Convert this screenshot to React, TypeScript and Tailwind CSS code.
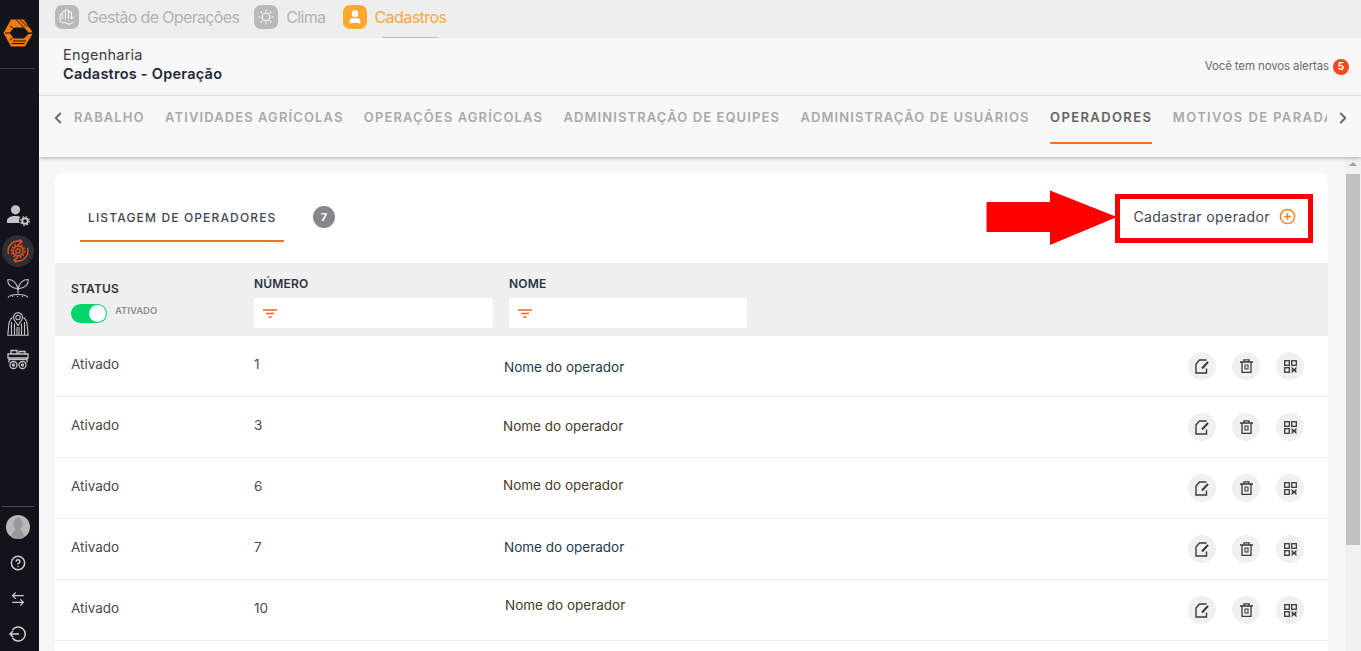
import React from "react";
import { ChevronLeft, ChevronRight, CirclePlus, CircleHelp, ArrowLeftRight, User } from "lucide-react";

const font = "font-['Inter','Noto_Sans',sans-serif]";

function Logo() {
  return (
    <svg width="30" height="28" viewBox="0 0 30 28" fill="none">
      <path d="M8 .5H22L29.500 13.500H25.500L21 8.500H11L6.500 14L11 19.500H21L25.500 15H29.500L22 27.500H8L.5 14Z" fill="#f47a0f" />
      <path d="M13 .5L21 8.500M17 .5L24.500 8M21 .5L27 9" stroke="#11151b" strokeWidth="1" />
      <path d="M2 14H6.500M7 7L10.500 9.500M7 21L10.500 18.500" stroke="#11151b" strokeWidth="1" />
      <path d="M10 22H23M8.500 24.500H21.500" stroke="#11151b" strokeWidth="1" />
    </svg>
  );
}

function PersonGear() {
  return (
    <svg width="23" height="21" viewBox="0 0 23 21" fill="#c4c4c4">
      <circle cx="8.500" cy="4.800" r="4.600" />
      <path d="M0 18v-2c0-3.500 3.500-5 8.500-5 2 0 3.700.3 5 .8-1.500 1.500-1.800 4.200-.8 6.200Z" />
      <circle cx="18" cy="16" r="2.800" fill="none" stroke="#c4c4c4" strokeWidth="2" />
      <circle cx="18" cy="16" r="4.300" fill="none" stroke="#c4c4c4" strokeWidth="1.200" strokeDasharray="1.700 1.700" />
    </svg>
  );
}

function OpsIcon() {
  return (
    <svg width="26" height="26" viewBox="0 0 26 26" fill="none" stroke="#f4511e" strokeWidth="1.300">
      <circle cx="13" cy="13" r="5" />
      <circle cx="13" cy="13" r="2.200" />
      <circle cx="13" cy="13" r="6.600" strokeDasharray="1.700 1.700" strokeWidth="1.500" />
      <path d="M3.500 16A10 10 0 0 1 16.500 3.700M22.500 10A10 10 0 0 1 9.500 22.300" />
      <path d="M14.500 1.500L17 3.900L14 6M11.500 24.500L9 22.100L12 20" />
    </svg>
  );
}

function SproutIcon() {
  return (
    <svg width="22" height="20" viewBox="0 0 22 20" fill="none" stroke="#c4c4c4" strokeWidth="1.100">
      <path d="M11 11C10 7 8 1.500 1 1.500C0 6 4 10 11 11Z" />
      <path d="M11 11C12 7 14 1.500 21 1.500C22 6 18 10 11 11Z" />
      <path d="M11 9V15.500M1 19.500C4 15.500 18 15.500 21 19.500" />
      <path d="M5 18.500H6M10 18.500H11M15 18.500H16" strokeWidth="1" />
    </svg>
  );
}

function SiloIcon() {
  return (
    <svg width="22" height="24" viewBox="0 0 22 24" fill="none" stroke="#c4c4c4" strokeWidth="1.100">
      <path d="M11 13.500L7 7.500A4.600 4.600 0 1 1 15 7.500Z" />
      <circle cx="11" cy="5.500" r="2.200" />
      <path d="M5.500 5.500C3 7 2.500 9 2 11L.8 23.200H21.200L20 11C19.500 9 19 7 16.500 5.500" />
      <path d="M4.500 23V10M7.500 23V11.500M10 23V15M12 23V15M14.500 23V11.500M17.500 23V10" />
    </svg>
  );
}

function TractorIcon() {
  return (
    <svg width="22" height="21" viewBox="0 0 22 21" fill="none" stroke="#c4c4c4" strokeWidth="1.300">
      <path d="M4 5V1.500H10V5M12 5V2.500H18V5M1 5H21V9H1ZM2 9V13.500M20 9V13.500" />
      <path d="M2 10.500H20" />
      <circle cx="6.500" cy="16" r="3.500" />
      <circle cx="15.500" cy="16" r="3.500" />
      <circle cx="6.500" cy="16" r="1" />
      <circle cx="15.500" cy="16" r="1" />
    </svg>
  );
}

function Avatar() {
  return (
    <div className="w-6 h-6 rounded-full bg-[#b8b8b8] overflow-hidden flex justify-center items-end">
      <svg width="24" height="24" viewBox="0 0 24 24" fill="#999999">
        <ellipse cx="12" cy="9" rx="4.500" ry="6.500" />
        <path d="M8.500 15H15.500L20 24H4Z" />
      </svg>
    </div>
  );
}

function LogoutIcon() {
  return (
    <svg width="18" height="18" viewBox="0 0 18 18" fill="none" stroke="#cfcfcf" strokeWidth="1.500">
      <path d="M3.500 5A7 7 0 1 1 3.500 13" />
      <path d="M1 9H10M4 6L1 9L4 12" />
    </svg>
  );
}

function HandsIcon() {
  return (
    <svg width="24" height="24" viewBox="0 0 24 24">
      <rect width="24" height="24" rx="7" fill="#b9b9b9" />
      <path d="M5 16V10A1 1 0 0 1 7.500 10V14M7.500 14V7.500A1 1 0 0 1 10.500 7.500V14M10.500 14V6A1 1 0 0 1 13.500 6V14M13.500 14V8A1 1 0 0 1 16.500 8V14M16.500 14L19 11.500M5 16C7 19 9 16.500 12 18.500C15 20 17 18 19 17" fill="none" stroke="#fff" strokeWidth="1" />
    </svg>
  );
}

function SunIcon() {
  return (
    <svg width="24" height="24" viewBox="0 0 24 24">
      <rect width="24" height="24" rx="7" fill="#b9b9b9" />
      <circle cx="12" cy="12" r="3.800" fill="none" stroke="#fff" strokeWidth="1.100" />
      <path d="M12 4.500V6.500M12 17.500V19.500M4.500 12H6.500M17.500 12H19.500M6.700 6.700L8.100 8.100M15.900 15.900L17.300 17.300M6.700 17.300L8.100 15.900M15.900 8.100L17.300 6.700" stroke="#fff" strokeWidth="1.100" />
    </svg>
  );
}

function FilterIcon() {
  return (
    <svg width="14" height="9" viewBox="0 0 14 9" fill="none" stroke="#f4621f" strokeWidth="1.400">
      <path d="M0 1H14M3 4.500H11M5.500 8H8.500" />
    </svg>
  );
}

function EditIcon() {
  return (
    <svg width="14" height="15" viewBox="0 0 14 15" fill="none" stroke="#3a3a3a" strokeWidth="1.400">
      <path d="M11.500 1H4.500L1 5V14H11.500V9.500" />
      <path d="M7 9.500L13 3" strokeWidth="2" />
    </svg>
  );
}

function TrashIcon() {
  return (
    <svg width="13" height="14" viewBox="0 0 13 14" fill="none" stroke="#3a3a3a" strokeWidth="1.300">
      <path d="M0 3H13M4 3V.8H9V3M2 3V13.300H11V3" />
      <path d="M5 6H8V10H5Z" strokeWidth="1.100" />
    </svg>
  );
}

function QrIcon() {
  return (
    <svg width="13" height="13" viewBox="0 0 13 13" fill="none" stroke="#3a3a3a" strokeWidth="1.300">
      <rect x=".7" y=".7" width="4.600" height="4.600" />
      <rect x="7.700" y=".7" width="4.600" height="4.600" />
      <rect x=".7" y="7.700" width="4.600" height="4.600" />
      <path d="M7.500 7.500L12.500 12.500M12.500 7.500L7.500 12.500M7.500 10H12.500" strokeWidth="1.100" />
    </svg>
  );
}

function TabLabel({ children, active, wide }: { children: React.ReactNode; active?: boolean; wide?: boolean }) {
  return (
    <div className={`h-full shrink-0 flex items-center pb-[2px] border-b-2 whitespace-nowrap text-[13px] font-semibold ${wide ? "tracking-[1.4px]" : "tracking-[1.1px]"} ${active ? "border-[#f47216] text-[#636363]" : "border-transparent text-[#a9a9a9]"}`}>
      {children}
    </div>
  );
}

const rows = [
  { status: "Ativado", num: "1", name: "Nome do operador", nameCls: "ml-[-5px] text-[#1f3a4d] pt-[2px]" },
  { status: "Ativado", num: "3", name: "Nome do operador", nameCls: "ml-[-6px] text-[#4a3a28] mt-[-2px]" },
  { status: "Ativado", num: "6", name: "Nome do operador", nameCls: "ml-[-6px] text-[#4a3a28] mt-[-6px]" },
  { status: "Ativado", num: "7", name: "Nome do operador", nameCls: "ml-[-5px] text-[#1f3a4d] mt-[-3px]" },
  { status: "Ativado", num: "10", name: "Nome do operador", nameCls: "ml-[-4px] text-[#4a3a28] mt-[-9px]" },
  { status: "", num: "", name: "", nameCls: "" },
];

function RoundBtn({ children }: { children: React.ReactNode }) {
  return <div className="w-7 h-7 rounded-full bg-[#f0f0f0] flex items-center justify-center">{children}</div>;
}

export default function App() {
  return (
    <div className={`${font} flex h-[651px] w-[1361px] overflow-hidden bg-[#f7f7f7]`}>
      <aside className="w-[39px] shrink-0 bg-[#11151b]">
        <div className="w-[35px] h-full flex flex-col items-center">
          <div className="h-[69px] w-full border-b border-[#3a3d42] flex items-center justify-center pb-[2px] shrink-0">
            <Logo />
          </div>
          <div className="mt-[135px] flex flex-col items-center">
            <div className="h-[22px] flex items-center justify-center pl-[1px]"><PersonGear /></div>
            <div className="mt-[9px] w-8 h-8 rounded-full bg-[#2b2e33] flex items-center justify-center"><OpsIcon /></div>
            <div className="mt-[11px] h-5 flex items-center"><SproutIcon /></div>
            <div className="mt-[14px] h-6 flex items-center"><SiloIcon /></div>
            <div className="mt-[13px] h-[21px] flex items-center"><TractorIcon /></div>
          </div>
          <div className="mt-auto w-full flex flex-col items-center">
            <div className="w-[32px] border-t border-[#4a4d52] pt-[8px]"></div>
            <Avatar />
            <CircleHelp className="mt-[16px] text-[#cfcfcf]" size={16} strokeWidth={2.2} />
            <ArrowLeftRight className="mt-[20px] text-[#cfcfcf]" size={16} strokeWidth={1.8} />
            <div className="mt-[18px] mb-[8px]"><LogoutIcon /></div>
          </div>
        </div>
      </aside>

      <div className="flex-1 min-w-0 flex flex-col relative">
        <div className="h-[38px] shrink-0 bg-[#eeeeee] flex items-center pl-[16px] pb-[4px] text-[16px] text-[#b3b3b3]">
          <HandsIcon />
          <span className="ml-[8px] tracking-[-0.65px]">Gestão de Operações</span>
          <span className="ml-[15px]"><SunIcon /></span>
          <span className="ml-[8px] tracking-[-0.65px]">Clima</span>
          <span className="ml-[18px] w-6 h-6 rounded-[7px] bg-[#fba92c] flex items-center justify-center">
            <User size={16} fill="#fff" className="text-white" />
          </span>
          <div className="ml-[7px] h-full flex items-center relative text-[#faa73a]">
            <span className="tracking-[-0.55px]">Cadastros</span>
            <div className="absolute bottom-[-4px] left-[8px] w-[56px] h-px bg-[#bdbdbd]"></div>
          </div>
        </div>

        <div className="h-[58px] shrink-0 bg-[#f8f8f8] border-b border-[#eeeeee] flex items-center justify-between pl-[24px] pr-[12px]">
          <div className="text-[14.5px] leading-[19px] pb-[5px] tracking-[0.25px]">
            <div className="text-[#3c3c3c]">Engenharia</div>
            <div className="font-semibold text-[#1f2a3a]">Cadastros - Operação</div>
          </div>
          <div className="flex items-center gap-[4px] text-[11.5px] text-[#6b6b6b]">
            <span className="tracking-[-0.13px]">Você tem novos alertas</span>
            <span className="w-4 h-4 rounded-full bg-[#f4471d] text-white font-bold text-[10px] flex items-center justify-center">5</span>
          </div>
        </div>

        <div className="h-[61px] shrink-0 bg-[#f8f8f8] shadow-[0_1px_4px_rgba(0,0,0,0.3)] z-10 flex items-start">
          <div className="w-[35px] pl-[10px] pt-[13px] shrink-0"><ChevronLeft size={18} strokeWidth={2.5} className="text-[#5f6b78]" /></div>
          <div className="w-[1253px] h-[48px] overflow-hidden flex gap-[20.4px]">
            <TabLabel>RABALHO</TabLabel>
            <TabLabel>ATIVIDADES AGRÍCOLAS</TabLabel>
            <TabLabel>OPERAÇÕES AGRÍCOLAS</TabLabel>
            <TabLabel>ADMINISTRAÇÃO DE EQUIPES</TabLabel>
            <TabLabel>ADMINISTRAÇÃO DE USUÁRIOS</TabLabel>
            <TabLabel active wide>OPERADORES</TabLabel>
            <TabLabel wide>MOTIVOS DE PARADA</TabLabel>
          </div>
          <div className="pl-[7px] pt-[13px]"><ChevronRight size={18} strokeWidth={2.5} className="text-[#5f6b78]" /></div>
        </div>

        <div className="flex-1 min-h-0 flex overflow-hidden">
          <main className="flex-1 min-w-0 pl-[16px] pr-[17px] pt-[15px]">
            <div className="bg-white rounded-t-[10px] relative">
              <div className="h-[91px] flex items-start pl-[25px] pr-[32px]">
                <div className="mt-[24px] h-[46px] w-[204px] border-b-2 border-[#f47216] flex items-center pl-[8px] text-[12px] font-medium tracking-[1.15px] text-[#3f4654]">
                  LISTAGEM DE OPERADORES
                </div>
                <div className="ml-[29px] mt-[34px] w-[22px] h-[22px] rounded-full bg-[#85878a] text-white text-[11px] font-bold flex items-center justify-center">7</div>
                <div className="ml-auto mt-[34px] flex items-center text-[14px] tracking-[0.4px] text-[#3f4654]">
                  Cadastrar operador
                  <CirclePlus size={17} strokeWidth={2} className="ml-[9px] text-[#f58220]" />
                </div>
              </div>

              <div className="h-[73px] bg-[#f0f0f0] flex pl-[16px] text-[12px] font-semibold text-[#2b3240]">
                <div className="w-[183px] pt-[18px]">
                  <div className="leading-[15px] tracking-[0.2px]">STATUS</div>
                  <div className="mt-[8px] flex items-start">
                    <div className="w-9 h-[19px] rounded-full bg-[#00d667] relative">
                      <div className="absolute right-[1px] top-[1px] w-[17px] h-[17px] rounded-full bg-white"></div>
                    </div>
                    <span className="ml-[8px] text-[9.5px] leading-[14px] font-semibold text-[#8e8e8e]">ATIVADO</span>
                  </div>
                </div>
                <div className="w-[255px] pt-[13px]">
                  <div className="leading-[15px] tracking-[0.2px]">NÚMERO</div>
                  <div className="mt-[7px] w-[239px] h-[30px] bg-white rounded-[2px] flex items-center pl-[9px]"><FilterIcon /></div>
                </div>
                <div className="pt-[13px]">
                  <div className="leading-[15px] tracking-[0.2px]">NOME</div>
                  <div className="mt-[7px] w-[238px] h-[30px] bg-white rounded-[2px] flex items-center pl-[9px]"><FilterIcon /></div>
                </div>
              </div>

              {rows.map((r, i) => (
                <div key={i} className="h-[61px] border-b border-[#ececec] flex items-center pl-[16px] pr-[24px] text-[13.5px] text-[#4a4a4a]">
                  <div className="w-[183px] pb-[4px]">{r.status}</div>
                  <div className="w-[255px] pb-[4px]">{r.num}</div>
                  <div className={`flex-1 ${r.nameCls}`}>{r.name}</div>
                  {r.num && (
                    <div className="flex gap-[16px]">
                      <RoundBtn><EditIcon /></RoundBtn>
                      <RoundBtn><TrashIcon /></RoundBtn>
                      <RoundBtn><QrIcon /></RoundBtn>
                    </div>
                  )}
                </div>
              ))}

              {/* red annotation arrow and box */}
              <div className="absolute left-[1060px] top-[22px] w-[198px] h-[49px] border-[5px] border-[#ff0000] pointer-events-none"></div>
              <svg className="absolute left-[931px] top-[18px] pointer-events-none" width="132" height="56" viewBox="0 0 132 56">
                <path d="M1.500 12H64V0.500L131 27L64 55V42H1.500Q.5 42 .5 41V13Q.5 12 1.500 12Z" fill="#ff0000" />
              </svg>
            </div>
          </main>
          <div className="w-4 shrink-0 bg-[#f1f1f1] relative">
            <div className="mx-auto mt-[5px] w-0 h-0 border-l-[4px] border-r-[4px] border-b-[4px] border-l-transparent border-r-transparent border-b-[#a3a3a3]"></div>
            <div className="absolute left-[1px] top-[17px] w-[14px] h-[371px] bg-[#c1c1c1]"></div>
          </div>
        </div>
      </div>
    </div>
  );
}
